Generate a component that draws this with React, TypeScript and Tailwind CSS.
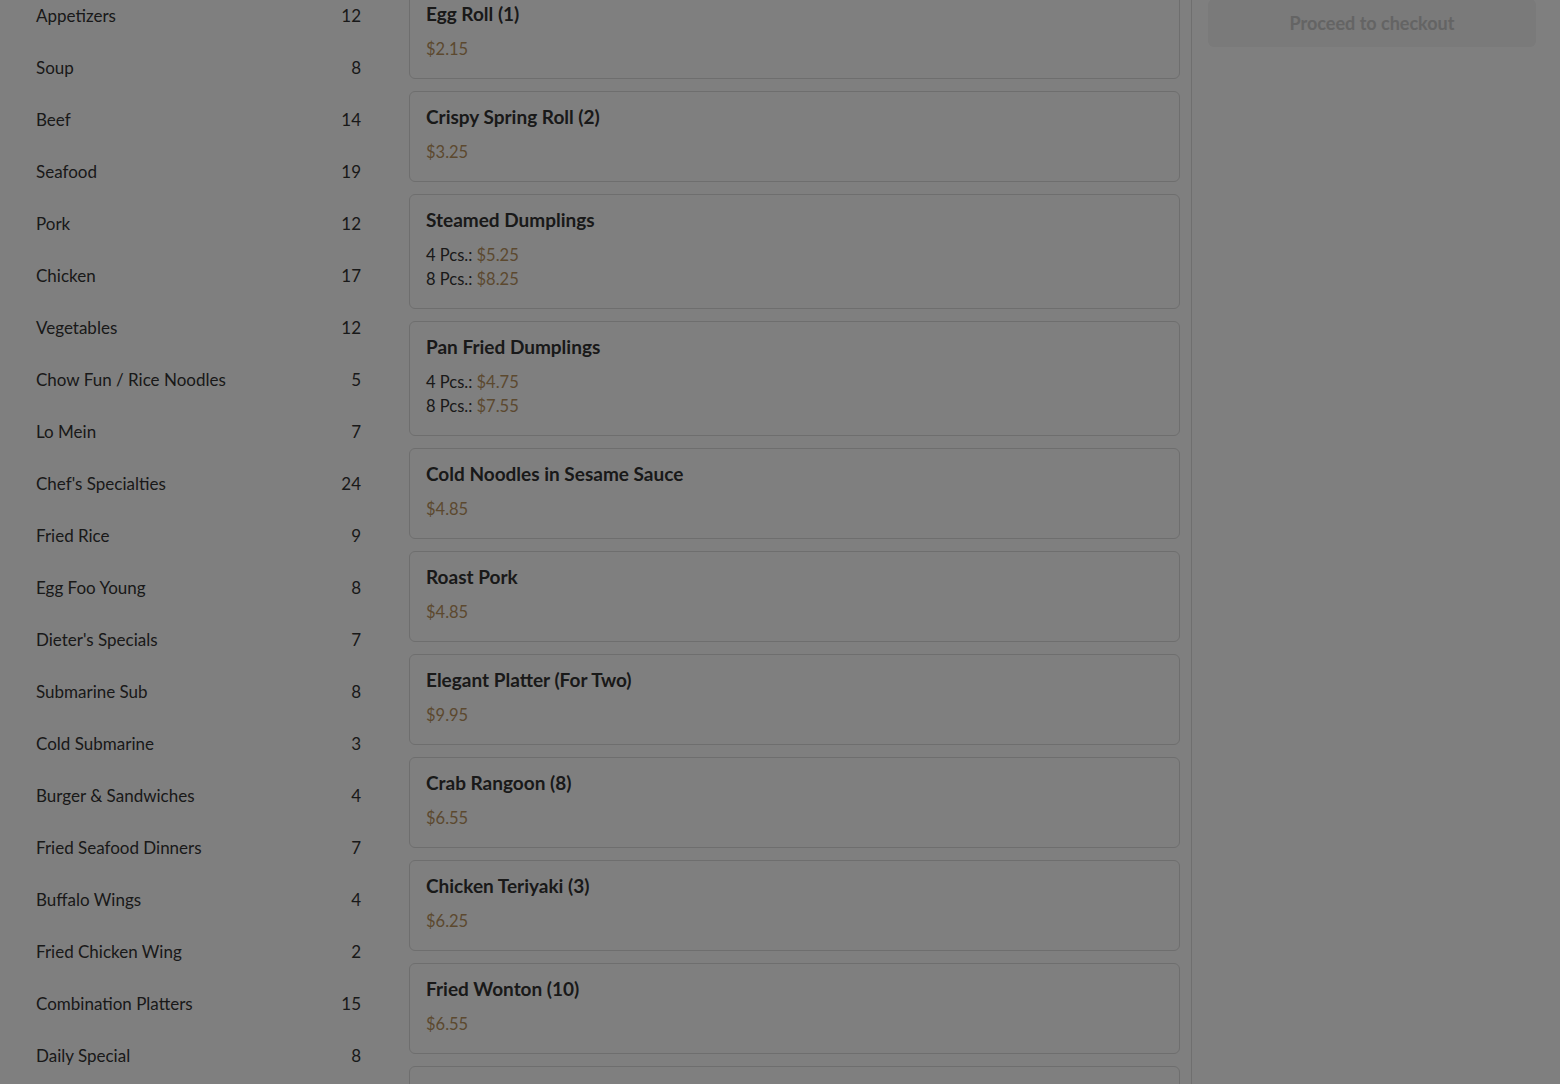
import React from 'react';

const categories: [string, number][] = [
  ['Appetizers', 12],
  ['Soup', 8],
  ['Beef', 14],
  ['Seafood', 19],
  ['Pork', 12],
  ['Chicken', 17],
  ['Vegetables', 12],
  ['Chow Fun / Rice Noodles', 5],
  ['Lo Mein', 7],
  ["Chef's Specialties", 24],
  ['Fried Rice', 9],
  ['Egg Foo Young', 8],
  ["Dieter's Specials", 7],
  ['Submarine Sub', 8],
  ['Cold Submarine', 3],
  ['Burger & Sandwiches', 4],
  ['Fried Seafood Dinners', 7],
  ['Buffalo Wings', 4],
  ['Fried Chicken Wing', 2],
  ['Combination Platters', 15],
  ['Daily Special', 8],
];

type Item = { name: string; price?: string; sizes?: [string, string][] };

const items: Item[] = [
  { name: 'Egg Roll (1)', price: '$2.15' },
  { name: 'Crispy Spring Roll (2)', price: '$3.25' },
  { name: 'Steamed Dumplings', sizes: [['4 Pcs.:', '$5.25'], ['8 Pcs.:', '$8.25']] },
  { name: 'Pan Fried Dumplings', sizes: [['4 Pcs.:', '$4.75'], ['8 Pcs.:', '$7.55']] },
  { name: 'Cold Noodles in Sesame Sauce', price: '$4.85' },
  { name: 'Roast Pork', price: '$4.85' },
  { name: 'Elegant Platter (For Two)', price: '$9.95' },
  { name: 'Crab Rangoon (8)', price: '$6.55' },
  { name: 'Chicken Teriyaki (3)', price: '$6.25' },
  { name: 'Fried Wonton (10)', price: '$6.55' },
  { name: 'Boneless Spare Ribs', price: '$7.95' },
];

function MenuCard({ item }: { item: Item }) {
  return (
    <div className="border border-[#dcdcdc] rounded-md bg-white px-4 pt-[14px] pb-[17px]">
      <div className="text-[19px] leading-[21px] font-bold text-[#333]">{item.name}</div>
      <div className="mt-[13px]">
        {item.price && <div className="text-[16.5px] leading-[24px] text-[#b8925e]">{item.price}</div>}
        {item.sizes &&
          item.sizes.map(([label, p]) => (
            <div key={label} className="text-[16.5px] leading-[24px] text-[#333]">
              {label} <span className="text-[#b8925e]">{p}</span>
            </div>
          ))}
      </div>
    </div>
  );
}

export default function App() {
  return (
    <div className="h-[1084px] overflow-hidden bg-white text-[#333]" style={{ fontFamily: 'Lato, "Noto Sans", sans-serif' }}>
      <div className="flex h-full">
        {/* Categories */}
        <aside className="w-[397px] shrink-0 px-9">
          <div className="mt-[-10px]">
            {categories.map(([name, count]) => (
              <div key={name} className="h-[52px] flex items-center justify-between text-[17px]">
                <span>{name}</span>
                <span>{count}</span>
              </div>
            ))}
          </div>
        </aside>

        {/* Menu items */}
        <main className="w-[795px] shrink-0 pl-3 pr-[11px] border-r border-[#dedede]">
          <div className="mt-[-12px] flex flex-col gap-3">
            {items.map(item => (
              <MenuCard key={item.name} item={item} />
            ))}
          </div>
        </main>

        {/* Cart */}
        <aside className="flex-1 pl-4 pr-6">
          <button className="w-full h-[48px] mt-[-1px] rounded-md bg-[#f4f4f4] text-[#c8c8c8] text-[18px] font-bold">
            Proceed to checkout
          </button>
        </aside>
      </div>

      {/* Modal backdrop */}
      <div className="fixed inset-0 bg-black/50" />
    </div>
  );
}
